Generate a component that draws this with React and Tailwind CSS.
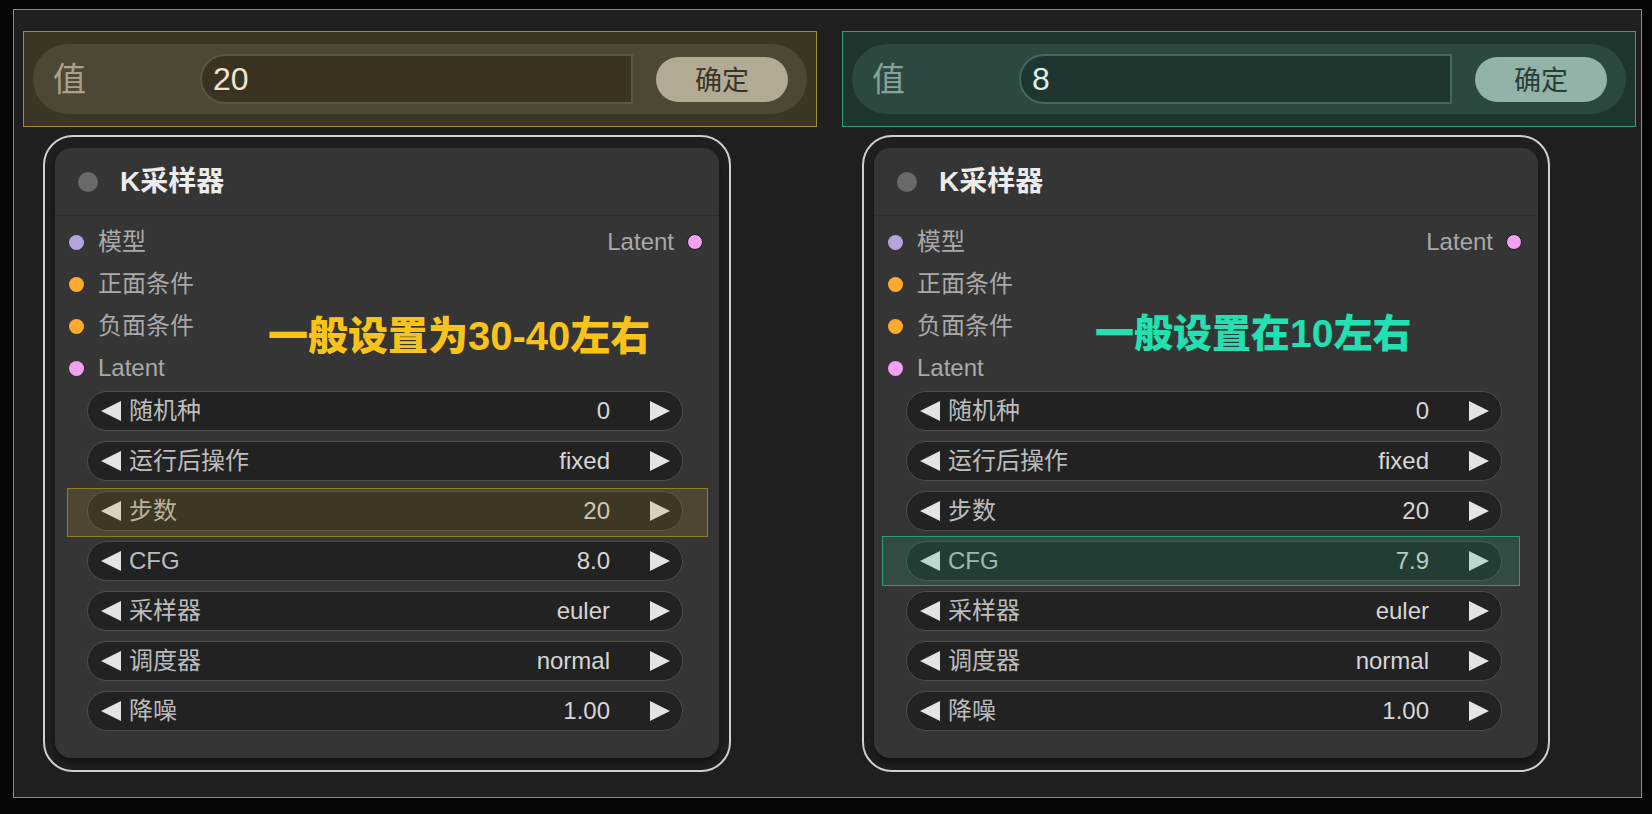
import React from 'react'

const FONT = "font-['Liberation_Sans','Noto_Sans_CJK_SC',sans-serif]"

const TONES = {
	yellow: {
		box: 'border-[#a08d2c] bg-[#3b3525]',
		pill: 'bg-[#4d4736]',
		label: 'text-[#aaa28b]',
		input: 'border-[#5d5544] bg-[#3b3322] text-[#ede6cf]',
		button: 'bg-[#b1ab96] text-[#3a3527]',
		note: 'text-[#f9c31a] text-[40px]',
		hl: 'border-[#8f7d2a] bg-[rgba(170,140,40,0.2)] -left-[20px] -right-[25px] -top-[3px] -bottom-[6px]',
	},
	green: {
		box: 'border-[#2f9e7b] bg-[#1e342f]',
		pill: 'bg-[#2d4841]',
		label: 'text-[#86a39a]',
		input: 'border-[#466660] bg-[#1e3530] text-[#dcefe8]',
		button: 'bg-[#93b2a8] text-[#2b3d37]',
		note: 'text-[#22e0b2] text-[39px]',
		hl: 'border-[#2e9a78] bg-[rgba(40,170,130,0.2)] -left-[24px] -right-[18px] -top-[5px] -bottom-[5px]',
	},
}

const slots = [
	{ label: '模型', color: 'bg-[#b4a4dc]' },
	{ label: '正面条件', color: 'bg-[#ffa92e]' },
	{ label: '负面条件', color: 'bg-[#ffa92e]' },
	{ label: 'Latent', color: 'bg-[#f4a0f0]' },
]

function ArrowLeft() {
	return (
		<svg width="22" height="22" viewBox="0 0 22 22" className="shrink-0">
			<path d="M1 11 L21 1 L21 21 Z" fill="#e4e4e4" />
		</svg>
	)
}

function ArrowRight() {
	return (
		<svg width="22" height="22" viewBox="0 0 22 22" className="shrink-0">
			<path d="M21 11 L1 1 L1 21 Z" fill="#e4e4e4" />
		</svg>
	)
}

function Widget({ label, value, highlight, tone }) {
	return (
		<div className="relative">
			<div className="flex h-[40px] items-center rounded-full border-[1.5px] border-[#4d4d4d] bg-[#222222] pl-[12px] pr-[11px] text-[24px] leading-none">
				<ArrowLeft />
				<span className="ml-[7px] text-[#bcbcbc]">{label}</span>
				<span className="ml-auto mr-[39px] text-[#d6d6d6]">{value}</span>
				<ArrowRight />
			</div>
			{highlight ? <div className={`pointer-events-none absolute border-[1.5px] ${TONES[tone].hl}`} /> : null}
		</div>
	)
}

function ValueBox({ value, tone }) {
	const t = TONES[tone]
	return (
		<div className={`flex h-[96px] w-[794px] items-center border-[1.5px] px-[9px] ${t.box}`}>
			<div className={`flex h-[70px] flex-1 items-center rounded-full pl-[20px] pr-[19px] ${t.pill}`}>
				<span className={`w-[147px] text-[33px] leading-none ${t.label}`}>值</span>
				<div className={`flex h-[50px] w-[433px] items-center rounded-l-full border-2 pl-[11px] text-[32px] leading-none ${t.input}`}>{value}</div>
				<div className={`ml-[23px] flex h-[45px] w-[132px] items-center justify-center rounded-full pt-[4px] text-[27px] leading-none ${t.button}`}>确定</div>
			</div>
		</div>
	)
}

function Node({ tone, note, noteClass, widgets, highlightIndex }) {
	const t = TONES[tone]
	return (
		<div className="ml-[20px] mt-[8px] flex h-[637px] w-[688px] rounded-[30px] border-2 border-[#cfcfcf] px-[10px] pb-[12px] pt-[11px]">
			<div className="relative flex flex-1 flex-col rounded-[16px] bg-[#353535] shadow-[0_4px_6px_rgba(0,0,0,0.45)]">
				<div className="flex h-[68px] items-center border-b border-[#2e2e2e] pl-[23px]">
					<span className="h-[20px] w-[20px] rounded-full bg-[#6a6a6a]" />
					<span className="ml-[22px] text-[28px] font-semibold leading-none text-[#ececec]">K采样器</span>
				</div>
				<div className="pt-[5px]">
					{slots.map((s, i) => (
						<div key={s.label} className="flex h-[42px] items-center pl-[14px] pr-[16px] text-[24px] leading-none text-[#a9a9a9]">
							<span className={`h-[15px] w-[15px] rounded-full ${s.color}`} />
							<span className="ml-[14px]">{s.label}</span>
							{i === 0 ? (
								<>
									<span className="ml-auto">Latent</span>
									<span className="ml-[13px] h-[16px] w-[16px] rounded-full border-[1.5px] border-[#1a1a1a] bg-[#f4a0f0]" />
								</>
							) : null}
						</div>
					))}
				</div>
				<div className="ml-[32px] mr-[36px] mt-[2px] flex flex-col gap-[10px]">
					{widgets.map((w, i) => (
						<Widget key={w[0]} label={w[0]} value={w[1]} tone={tone} highlight={i === highlightIndex} />
					))}
				</div>
				<div className={`absolute font-black leading-[44px] ${t.note} ${noteClass}`}>{note}</div>
			</div>
		</div>
	)
}

export default function App() {
	const left = [
		['随机种', '0'],
		['运行后操作', 'fixed'],
		['步数', '20'],
		['CFG', '8.0'],
		['采样器', 'euler'],
		['调度器', 'normal'],
		['降噪', '1.00'],
	]
	const right = left.map((w) => (w[0] === 'CFG' ? ['CFG', '7.9'] : w))

	return (
		<div className={`h-[814px] w-[1652px] overflow-hidden bg-[#050505] pl-[13px] pt-[9px] ${FONT}`}>
			<div className="flex h-[789px] w-[1629px] gap-[25px] border border-[#8a8a8a] bg-[#1f1f1f] pl-[9px] pt-[21px]">
				<div className="flex flex-col">
					<ValueBox value="20" tone="yellow" />
					<Node tone="yellow" note="一般设置为30-40左右" noteClass="left-[213px] top-[166px]" widgets={left} highlightIndex={2} />
				</div>
				<div className="flex flex-col">
					<ValueBox value="8" tone="green" />
					<Node tone="green" note="一般设置在10左右" noteClass="left-[221px] top-[164px]" widgets={right} highlightIndex={3} />
				</div>
			</div>
		</div>
	)
}
